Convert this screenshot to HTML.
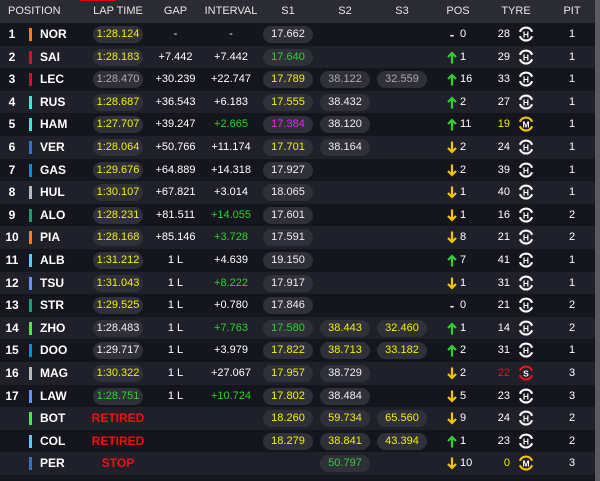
<!DOCTYPE html>
<html><head><meta charset="utf-8"><style>
*{margin:0;padding:0;box-sizing:border-box}
body{width:600px;height:481px;background:#15151d;font-family:"Liberation Sans",sans-serif;position:relative;overflow:hidden;color:#fff}
.hd{position:absolute;left:0;top:0;width:595px;height:23px;background:#2b2b33;font-size:11px;color:#e6e6e6}
.hd span{position:absolute;top:5px;text-align:center}
.red{position:absolute;left:80px;top:0;width:36px;height:1px;background:#e10600}
.sb{position:absolute;left:595px;top:0;width:5px;height:481px;background:#5a5a60}
.r{position:absolute;left:0;width:595px;height:23px;font-size:11px}
.o{background:#15151d}.e{background:#20202a}
.r span{position:absolute;top:5px;line-height:13px;text-align:center}
.p{left:0;width:24px;font-weight:bold;font-size:12px}
.b{left:29px;width:3px;height:13px;top:5px!important}
.n{left:40px;text-align:left!important;font-weight:bold;font-size:12px}
.pl{background:#30303a;border-radius:9px;height:17px;top:3px!important;line-height:17px!important;width:50px}
.lt{left:93px}.g{left:148px;width:55px}.iv{left:203px;width:56px}
.s1{left:263px}.s2{left:320px}.s3{left:377px}
.ar{left:446px;width:12px;font-weight:bold;font-size:13px}
.r svg.a{position:absolute;left:447px;top:5px}
.pn{left:460px;text-align:left!important}
.tn{left:488px;width:22px;text-align:right!important}
.r svg.t{position:absolute;left:518px;top:3px}
.pt{left:562px;width:20px}
.y{color:#f0f000}.gr{color:#2ed12e}.m{color:#e22be2}.w{color:#eee}.gy{color:#aaa}.rd{color:#e8141c}.ret{color:#f01010;font-weight:bold;font-size:12px}
</style></head><body>
<div class="hd">
<span style="left:8px">POSITION</span><span style="left:90px;width:56px">LAP TIME</span><span style="left:148px;width:55px">GAP</span><span style="left:200px;width:62px">INTERVAL</span><span style="left:263px;width:50px">S1</span><span style="left:320px;width:50px">S2</span><span style="left:377px;width:50px">S3</span><span style="left:440px;width:36px">POS</span><span style="left:496px;width:40px">TYRE</span><span style="left:562px;width:20px">PIT</span>
</div>
<div class="red"></div>

<div class="r o" style="top:23px"><span class="p">1</span><span class="b" style="background:#ff8000"></span><span class="n">NOR</span><span class="pl lt y">1:28.124</span><span class="g">-</span><span class="iv">-</span><span class="pl s1 w">17.662</span><span class="ar w">-</span><span class="pn">0</span><span class="tn">28</span><svg class="t" width="16" height="16" viewBox="0 0 16 16"><path d="M1.9 5.8A6.5 6.5 0 0 1 14.1 5.8M14.1 10.2A6.5 6.5 0 0 1 1.9 10.2" fill="none" stroke="#fff" stroke-width="2.2"/><text x="8" y="11.3" font-size="8.5" font-weight="bold" text-anchor="middle" fill="#fff" font-family="Liberation Sans">H</text></svg><span class="pt">1</span></div>
<div class="r e" style="top:45.6px"><span class="p">2</span><span class="b" style="background:#e8002d"></span><span class="n">SAI</span><span class="pl lt y">1:28.183</span><span class="g">+7.442</span><span class="iv">+7.442</span><span class="pl s1 gr">17.640</span><svg class="a" width="10" height="13" viewBox="0 0 10 13"><path d="M5 12.5V2M1 6L5 2L9 6" fill="none" stroke="#2ed12e" stroke-width="2.2"/></svg><span class="pn">1</span><span class="tn">29</span><svg class="t" width="16" height="16" viewBox="0 0 16 16"><path d="M1.9 5.8A6.5 6.5 0 0 1 14.1 5.8M14.1 10.2A6.5 6.5 0 0 1 1.9 10.2" fill="none" stroke="#fff" stroke-width="2.2"/><text x="8" y="11.3" font-size="8.5" font-weight="bold" text-anchor="middle" fill="#fff" font-family="Liberation Sans">H</text></svg><span class="pt">1</span></div>
<div class="r o" style="top:68.2px"><span class="p">3</span><span class="b" style="background:#e8002d"></span><span class="n">LEC</span><span class="pl lt gy">1:28.470</span><span class="g">+30.239</span><span class="iv">+22.747</span><span class="pl s1 y">17.789</span><span class="pl s2 gy">38.122</span><span class="pl s3 gy">32.559</span><svg class="a" width="10" height="13" viewBox="0 0 10 13"><path d="M5 12.5V2M1 6L5 2L9 6" fill="none" stroke="#2ed12e" stroke-width="2.2"/></svg><span class="pn">16</span><span class="tn">33</span><svg class="t" width="16" height="16" viewBox="0 0 16 16"><path d="M1.9 5.8A6.5 6.5 0 0 1 14.1 5.8M14.1 10.2A6.5 6.5 0 0 1 1.9 10.2" fill="none" stroke="#fff" stroke-width="2.2"/><text x="8" y="11.3" font-size="8.5" font-weight="bold" text-anchor="middle" fill="#fff" font-family="Liberation Sans">H</text></svg><span class="pt">1</span></div>
<div class="r e" style="top:90.8px"><span class="p">4</span><span class="b" style="background:#27f4d2"></span><span class="n">RUS</span><span class="pl lt y">1:28.687</span><span class="g">+36.543</span><span class="iv">+6.183</span><span class="pl s1 y">17.555</span><span class="pl s2 w">38.432</span><svg class="a" width="10" height="13" viewBox="0 0 10 13"><path d="M5 12.5V2M1 6L5 2L9 6" fill="none" stroke="#2ed12e" stroke-width="2.2"/></svg><span class="pn">2</span><span class="tn">27</span><svg class="t" width="16" height="16" viewBox="0 0 16 16"><path d="M1.9 5.8A6.5 6.5 0 0 1 14.1 5.8M14.1 10.2A6.5 6.5 0 0 1 1.9 10.2" fill="none" stroke="#fff" stroke-width="2.2"/><text x="8" y="11.3" font-size="8.5" font-weight="bold" text-anchor="middle" fill="#fff" font-family="Liberation Sans">H</text></svg><span class="pt">1</span></div>
<div class="r o" style="top:113.4px"><span class="p">5</span><span class="b" style="background:#27f4d2"></span><span class="n">HAM</span><span class="pl lt y">1:27.707</span><span class="g">+39.247</span><span class="iv gr">+2.665</span><span class="pl s1 m">17.384</span><span class="pl s2 w">38.120</span><svg class="a" width="10" height="13" viewBox="0 0 10 13"><path d="M5 12.5V2M1 6L5 2L9 6" fill="none" stroke="#2ed12e" stroke-width="2.2"/></svg><span class="pn">11</span><span class="tn y">19</span><svg class="t" width="16" height="16" viewBox="0 0 16 16"><path d="M1.9 5.8A6.5 6.5 0 0 1 14.1 5.8M14.1 10.2A6.5 6.5 0 0 1 1.9 10.2" fill="none" stroke="#f5c400" stroke-width="2.2"/><text x="8" y="11.3" font-size="8.5" font-weight="bold" text-anchor="middle" fill="#fff" font-family="Liberation Sans">M</text></svg><span class="pt">1</span></div>
<div class="r e" style="top:136px"><span class="p">6</span><span class="b" style="background:#3671c6"></span><span class="n">VER</span><span class="pl lt y">1:28.064</span><span class="g">+50.766</span><span class="iv">+11.174</span><span class="pl s1 y">17.701</span><span class="pl s2 w">38.164</span><svg class="a" width="10" height="13" viewBox="0 0 10 13"><path d="M5 0.5V11M1 7L5 11L9 7" fill="none" stroke="#f5c400" stroke-width="2.2"/></svg><span class="pn">2</span><span class="tn">24</span><svg class="t" width="16" height="16" viewBox="0 0 16 16"><path d="M1.9 5.8A6.5 6.5 0 0 1 14.1 5.8M14.1 10.2A6.5 6.5 0 0 1 1.9 10.2" fill="none" stroke="#fff" stroke-width="2.2"/><text x="8" y="11.3" font-size="8.5" font-weight="bold" text-anchor="middle" fill="#fff" font-family="Liberation Sans">H</text></svg><span class="pt">1</span></div>
<div class="r o" style="top:158.6px"><span class="p">7</span><span class="b" style="background:#0093cc"></span><span class="n">GAS</span><span class="pl lt y">1:29.676</span><span class="g">+64.889</span><span class="iv">+14.318</span><span class="pl s1 w">17.927</span><svg class="a" width="10" height="13" viewBox="0 0 10 13"><path d="M5 0.5V11M1 7L5 11L9 7" fill="none" stroke="#f5c400" stroke-width="2.2"/></svg><span class="pn">2</span><span class="tn">39</span><svg class="t" width="16" height="16" viewBox="0 0 16 16"><path d="M1.9 5.8A6.5 6.5 0 0 1 14.1 5.8M14.1 10.2A6.5 6.5 0 0 1 1.9 10.2" fill="none" stroke="#fff" stroke-width="2.2"/><text x="8" y="11.3" font-size="8.5" font-weight="bold" text-anchor="middle" fill="#fff" font-family="Liberation Sans">H</text></svg><span class="pt">1</span></div>
<div class="r e" style="top:181.2px"><span class="p">8</span><span class="b" style="background:#b6babd"></span><span class="n">HUL</span><span class="pl lt y">1:30.107</span><span class="g">+67.821</span><span class="iv">+3.014</span><span class="pl s1 w">18.065</span><svg class="a" width="10" height="13" viewBox="0 0 10 13"><path d="M5 0.5V11M1 7L5 11L9 7" fill="none" stroke="#f5c400" stroke-width="2.2"/></svg><span class="pn">1</span><span class="tn">40</span><svg class="t" width="16" height="16" viewBox="0 0 16 16"><path d="M1.9 5.8A6.5 6.5 0 0 1 14.1 5.8M14.1 10.2A6.5 6.5 0 0 1 1.9 10.2" fill="none" stroke="#fff" stroke-width="2.2"/><text x="8" y="11.3" font-size="8.5" font-weight="bold" text-anchor="middle" fill="#fff" font-family="Liberation Sans">H</text></svg><span class="pt">1</span></div>
<div class="r o" style="top:203.8px"><span class="p">9</span><span class="b" style="background:#229971"></span><span class="n">ALO</span><span class="pl lt y">1:28.231</span><span class="g">+81.511</span><span class="iv gr">+14.055</span><span class="pl s1 w">17.601</span><svg class="a" width="10" height="13" viewBox="0 0 10 13"><path d="M5 0.5V11M1 7L5 11L9 7" fill="none" stroke="#f5c400" stroke-width="2.2"/></svg><span class="pn">1</span><span class="tn">16</span><svg class="t" width="16" height="16" viewBox="0 0 16 16"><path d="M1.9 5.8A6.5 6.5 0 0 1 14.1 5.8M14.1 10.2A6.5 6.5 0 0 1 1.9 10.2" fill="none" stroke="#fff" stroke-width="2.2"/><text x="8" y="11.3" font-size="8.5" font-weight="bold" text-anchor="middle" fill="#fff" font-family="Liberation Sans">H</text></svg><span class="pt">2</span></div>
<div class="r e" style="top:226.4px"><span class="p">10</span><span class="b" style="background:#ff8000"></span><span class="n">PIA</span><span class="pl lt y">1:28.168</span><span class="g">+85.146</span><span class="iv gr">+3.728</span><span class="pl s1 w">17.591</span><svg class="a" width="10" height="13" viewBox="0 0 10 13"><path d="M5 0.5V11M1 7L5 11L9 7" fill="none" stroke="#f5c400" stroke-width="2.2"/></svg><span class="pn">8</span><span class="tn">21</span><svg class="t" width="16" height="16" viewBox="0 0 16 16"><path d="M1.9 5.8A6.5 6.5 0 0 1 14.1 5.8M14.1 10.2A6.5 6.5 0 0 1 1.9 10.2" fill="none" stroke="#fff" stroke-width="2.2"/><text x="8" y="11.3" font-size="8.5" font-weight="bold" text-anchor="middle" fill="#fff" font-family="Liberation Sans">H</text></svg><span class="pt">2</span></div>
<div class="r o" style="top:249px"><span class="p">11</span><span class="b" style="background:#64c4ff"></span><span class="n">ALB</span><span class="pl lt y">1:31.212</span><span class="g">1 L</span><span class="iv">+4.639</span><span class="pl s1 w">19.150</span><svg class="a" width="10" height="13" viewBox="0 0 10 13"><path d="M5 12.5V2M1 6L5 2L9 6" fill="none" stroke="#2ed12e" stroke-width="2.2"/></svg><span class="pn">7</span><span class="tn">41</span><svg class="t" width="16" height="16" viewBox="0 0 16 16"><path d="M1.9 5.8A6.5 6.5 0 0 1 14.1 5.8M14.1 10.2A6.5 6.5 0 0 1 1.9 10.2" fill="none" stroke="#fff" stroke-width="2.2"/><text x="8" y="11.3" font-size="8.5" font-weight="bold" text-anchor="middle" fill="#fff" font-family="Liberation Sans">H</text></svg><span class="pt">1</span></div>
<div class="r e" style="top:271.6px"><span class="p">12</span><span class="b" style="background:#6692ff"></span><span class="n">TSU</span><span class="pl lt y">1:31.043</span><span class="g">1 L</span><span class="iv gr">+8.222</span><span class="pl s1 w">17.917</span><svg class="a" width="10" height="13" viewBox="0 0 10 13"><path d="M5 0.5V11M1 7L5 11L9 7" fill="none" stroke="#f5c400" stroke-width="2.2"/></svg><span class="pn">1</span><span class="tn">31</span><svg class="t" width="16" height="16" viewBox="0 0 16 16"><path d="M1.9 5.8A6.5 6.5 0 0 1 14.1 5.8M14.1 10.2A6.5 6.5 0 0 1 1.9 10.2" fill="none" stroke="#fff" stroke-width="2.2"/><text x="8" y="11.3" font-size="8.5" font-weight="bold" text-anchor="middle" fill="#fff" font-family="Liberation Sans">H</text></svg><span class="pt">1</span></div>
<div class="r o" style="top:294.2px"><span class="p">13</span><span class="b" style="background:#229971"></span><span class="n">STR</span><span class="pl lt y">1:29.525</span><span class="g">1 L</span><span class="iv">+0.780</span><span class="pl s1 w">17.846</span><span class="ar w">-</span><span class="pn">0</span><span class="tn">21</span><svg class="t" width="16" height="16" viewBox="0 0 16 16"><path d="M1.9 5.8A6.5 6.5 0 0 1 14.1 5.8M14.1 10.2A6.5 6.5 0 0 1 1.9 10.2" fill="none" stroke="#fff" stroke-width="2.2"/><text x="8" y="11.3" font-size="8.5" font-weight="bold" text-anchor="middle" fill="#fff" font-family="Liberation Sans">H</text></svg><span class="pt">2</span></div>
<div class="r e" style="top:316.8px"><span class="p">14</span><span class="b" style="background:#52e252"></span><span class="n">ZHO</span><span class="pl lt w">1:28.483</span><span class="g">1 L</span><span class="iv gr">+7.763</span><span class="pl s1 gr">17.580</span><span class="pl s2 y">38.443</span><span class="pl s3 y">32.460</span><svg class="a" width="10" height="13" viewBox="0 0 10 13"><path d="M5 12.5V2M1 6L5 2L9 6" fill="none" stroke="#2ed12e" stroke-width="2.2"/></svg><span class="pn">1</span><span class="tn">14</span><svg class="t" width="16" height="16" viewBox="0 0 16 16"><path d="M1.9 5.8A6.5 6.5 0 0 1 14.1 5.8M14.1 10.2A6.5 6.5 0 0 1 1.9 10.2" fill="none" stroke="#fff" stroke-width="2.2"/><text x="8" y="11.3" font-size="8.5" font-weight="bold" text-anchor="middle" fill="#fff" font-family="Liberation Sans">H</text></svg><span class="pt">2</span></div>
<div class="r o" style="top:339.4px"><span class="p">15</span><span class="b" style="background:#0093cc"></span><span class="n">DOO</span><span class="pl lt w">1:29.717</span><span class="g">1 L</span><span class="iv">+3.979</span><span class="pl s1 y">17.822</span><span class="pl s2 y">38.713</span><span class="pl s3 y">33.182</span><svg class="a" width="10" height="13" viewBox="0 0 10 13"><path d="M5 12.5V2M1 6L5 2L9 6" fill="none" stroke="#2ed12e" stroke-width="2.2"/></svg><span class="pn">2</span><span class="tn">31</span><svg class="t" width="16" height="16" viewBox="0 0 16 16"><path d="M1.9 5.8A6.5 6.5 0 0 1 14.1 5.8M14.1 10.2A6.5 6.5 0 0 1 1.9 10.2" fill="none" stroke="#fff" stroke-width="2.2"/><text x="8" y="11.3" font-size="8.5" font-weight="bold" text-anchor="middle" fill="#fff" font-family="Liberation Sans">H</text></svg><span class="pt">1</span></div>
<div class="r e" style="top:362px"><span class="p">16</span><span class="b" style="background:#b6babd"></span><span class="n">MAG</span><span class="pl lt y">1:30.322</span><span class="g">1 L</span><span class="iv">+27.067</span><span class="pl s1 y">17.957</span><span class="pl s2 w">38.729</span><svg class="a" width="10" height="13" viewBox="0 0 10 13"><path d="M5 0.5V11M1 7L5 11L9 7" fill="none" stroke="#f5c400" stroke-width="2.2"/></svg><span class="pn">2</span><span class="tn rd">22</span><svg class="t" width="16" height="16" viewBox="0 0 16 16"><path d="M1.9 5.8A6.5 6.5 0 0 1 14.1 5.8M14.1 10.2A6.5 6.5 0 0 1 1.9 10.2" fill="none" stroke="#e8141c" stroke-width="2.2"/><text x="8" y="11.3" font-size="8.5" font-weight="bold" text-anchor="middle" fill="#fff" font-family="Liberation Sans">S</text></svg><span class="pt">3</span></div>
<div class="r o" style="top:384.6px"><span class="p">17</span><span class="b" style="background:#6692ff"></span><span class="n">LAW</span><span class="pl lt gr">1:28.751</span><span class="g">1 L</span><span class="iv gr">+10.724</span><span class="pl s1 y">17.802</span><span class="pl s2 w">38.484</span><svg class="a" width="10" height="13" viewBox="0 0 10 13"><path d="M5 0.5V11M1 7L5 11L9 7" fill="none" stroke="#f5c400" stroke-width="2.2"/></svg><span class="pn">5</span><span class="tn">23</span><svg class="t" width="16" height="16" viewBox="0 0 16 16"><path d="M1.9 5.8A6.5 6.5 0 0 1 14.1 5.8M14.1 10.2A6.5 6.5 0 0 1 1.9 10.2" fill="none" stroke="#fff" stroke-width="2.2"/><text x="8" y="11.3" font-size="8.5" font-weight="bold" text-anchor="middle" fill="#fff" font-family="Liberation Sans">H</text></svg><span class="pt">3</span></div>
<div class="r e" style="top:407.2px"><span class="b" style="background:#52e252"></span><span class="n">BOT</span><span class="ret" style="left:88px;width:60px">RETIRED</span><span class="pl s1 y">18.260</span><span class="pl s2 y">59.734</span><span class="pl s3 y">65.560</span><svg class="a" width="10" height="13" viewBox="0 0 10 13"><path d="M5 0.5V11M1 7L5 11L9 7" fill="none" stroke="#f5c400" stroke-width="2.2"/></svg><span class="pn">9</span><span class="tn">24</span><svg class="t" width="16" height="16" viewBox="0 0 16 16"><path d="M1.9 5.8A6.5 6.5 0 0 1 14.1 5.8M14.1 10.2A6.5 6.5 0 0 1 1.9 10.2" fill="none" stroke="#fff" stroke-width="2.2"/><text x="8" y="11.3" font-size="8.5" font-weight="bold" text-anchor="middle" fill="#fff" font-family="Liberation Sans">H</text></svg><span class="pt">2</span></div>
<div class="r o" style="top:429.8px"><span class="b" style="background:#64c4ff"></span><span class="n">COL</span><span class="ret" style="left:88px;width:60px">RETIRED</span><span class="pl s1 y">18.279</span><span class="pl s2 y">38.841</span><span class="pl s3 y">43.394</span><svg class="a" width="10" height="13" viewBox="0 0 10 13"><path d="M5 12.5V2M1 6L5 2L9 6" fill="none" stroke="#2ed12e" stroke-width="2.2"/></svg><span class="pn">1</span><span class="tn">23</span><svg class="t" width="16" height="16" viewBox="0 0 16 16"><path d="M1.9 5.8A6.5 6.5 0 0 1 14.1 5.8M14.1 10.2A6.5 6.5 0 0 1 1.9 10.2" fill="none" stroke="#fff" stroke-width="2.2"/><text x="8" y="11.3" font-size="8.5" font-weight="bold" text-anchor="middle" fill="#fff" font-family="Liberation Sans">H</text></svg><span class="pt">2</span></div>
<div class="r e" style="top:452.4px"><span class="b" style="background:#3671c6"></span><span class="n">PER</span><span class="ret" style="left:88px;width:60px">STOP</span><span class="pl s2 gr">50.797</span><svg class="a" width="10" height="13" viewBox="0 0 10 13"><path d="M5 0.5V11M1 7L5 11L9 7" fill="none" stroke="#f5c400" stroke-width="2.2"/></svg><span class="pn">10</span><span class="tn y">0</span><svg class="t" width="16" height="16" viewBox="0 0 16 16"><path d="M1.9 5.8A6.5 6.5 0 0 1 14.1 5.8M14.1 10.2A6.5 6.5 0 0 1 1.9 10.2" fill="none" stroke="#f5c400" stroke-width="2.2"/><text x="8" y="11.3" font-size="8.5" font-weight="bold" text-anchor="middle" fill="#fff" font-family="Liberation Sans">M</text></svg><span class="pt">3</span></div>
<div class="sb"></div>
</body></html>
